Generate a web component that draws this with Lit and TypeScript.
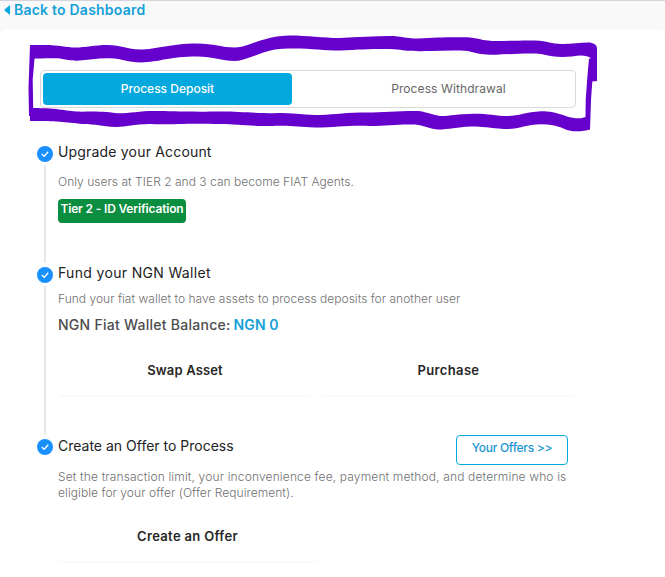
import { LitElement, html, css } from "lit";
import { customElement, state } from "lit/decorators.js";

const tick = html`<svg class="tick" viewBox="0 0 16 16" width="16" height="16">
  <circle cx="8" cy="8" r="8" fill="#1890ff"></circle>
  <path d="M4.8 8.1 L7.2 10.3 L11.2 5.8" fill="none" stroke="#fff" stroke-width="1.3"></path>
</svg>`;

const marker = html`<svg class="marker" viewBox="0 0 665 140" width="665" height="140">
  <path fill="#6600cc" fill-rule="evenodd" d="M30 45 L45 45 C58 45 67 47.5 75 47.5 C86 47.5 95 45 107 45 C122 45 127 49.5 140 49.5 C157 49.5 170 43.5 197 43.5 C214 43.5 222 47.5 235 47.5 C249 47.5 262 36 290 35.5 C308 35.5 322 38 340 38 C358 37 375 36 390 36 C402 36 404 38.5 418 38.5 C438 37.5 450 37 470 37.5 C480 38.5 484 41 496 41 C510 41 520 40.2 535 40.5 C548 41 551 44 562 44 C573 44 582 42.2 590 42.5 C595 43.5 597 45 597 49 L597 81 L592.3 81.5 L591 100 L590 129.5 C584 131.5 573 132 567 130 C558 126 550 124.3 541 124.3 C527 124.3 520 129 508 129 C495 129 487 126.5 471 126.5 C457 127 449 129.5 438 129.5 C426 128 425 125.5 415 124.5 C396 124 388 126 370 126 C350 125 336 127.5 315 127.5 C297 127 292 125 270 126 C245 126 238 124 220 124 C182 123 170 125 150 124 C133 124 127 127 116 127 C101 126.5 96 124 83 124 C64 122 57 121 30 121 L30 116 L29 116 L28.5 88 Z
    M34.5 58.8 C36 58.3 45 58.5 58 58.3 C64 59 68 60.7 77 60.7 C89 60 98 58 110 58.3 C123 58.8 127 62.5 141 62.5 C159 62 170 56.5 197 56.5 C214 56.5 221 61 235 61 C248 60.5 264 49.5 283 48.8 C305 47.5 322 50.5 340 50.5 C366 49 386 48.5 397 49.5 C408 50.7 410 51.5 430 51 C443 50.5 457 50 468 51 C479 54 485 55 496 54.8 C512 54 530 52.8 541 54 C553 57 560 57.5 572 56.5 C580 55 587 55 591 58.3 L589 58.8 L587.5 75 L585.7 100 L585.5 117 C580 119.5 573 118 567 116.5 C556 112.5 549 111.3 541 111.3 C526 112 519 116 508 116 C495 116 487 113.5 473 113.8 C457 114 449 116.3 440 116 C426 113 424 111 415 111 C394 111 380 113 360 112.5 C342 113 331 115 315 115 C299 114.5 286 112.5 275 113.3 C250 113 241 111.5 220 111.5 C185 112 170 111 155 111 C138 111 130 113.5 117 113.3 C103 111.5 94 111.5 82 111.7 C66 111.5 60 108 33.2 108 L32.7 80 Z"></path>
</svg>`;

@customElement("app-root")
export class AppRoot extends LitElement {
  @state() private mode: "deposit" | "withdrawal" = "deposit";

  static styles = css`
    :host {
      display: block; position: relative; box-sizing: border-box; height: 577px; overflow: hidden;
      background: #f9f9f9; border-top: 1px solid #d3d5de;
      font-family: Inter, "Noto Sans", sans-serif; color: #262626;
    }
    * { box-sizing: border-box; }
    .back { display: flex; align-items: center; height: 29px; padding: 0 0 12px 4px; gap: 4px; color: #14a1d8; font-size: 14px; font-weight: 600; letter-spacing: 0.22px; }
    .arrow { display: block; flex: none; }
    .card { height: 547px; background: #fff; border-radius: 6px 6px 0 0; padding: 40px 0 0 37px; }
    .tabs { display: flex; width: 536px; height: 38px; margin-left: 3px; border: 1px solid #d9d9d9; border-radius: 4px; padding: 2px; }
    .tab { height: 32px; border-radius: 4px; line-height: 31px; text-align: center; font-size: 12px; color: #666; letter-spacing: 0.1px; flex: 0 0 282px; padding-left: 31px; }
    .tab.active { flex: 0 0 249px; background: #02a8de; color: #fff; font-weight: 500; letter-spacing: 0; padding: 0; }
    .steps { padding-top: 38px; }
    .step { display: flex; gap: 5px; }
    .s1 { height: 121px; }
    .s2 { height: 172px; }
    .rail { display: flex; flex-direction: column; align-items: center; width: 16px; }
    .tick { display: block; flex: none; }
    .rail::after { content: ""; width: 2px; flex: 1; background: #e8e8e8; margin: 3px 0 4px; }
    .s3 .rail::after { display: none; }
    .body { width: 518px; }
    .head { display: flex; justify-content: space-between; height: 26px; }
    .title { font-size: 14px; line-height: 17px; margin-top: -2px; white-space: nowrap; color: #222; }
    .s1 .title { letter-spacing: 0.18px; margin-top: -3px; }
    .s2 .title { letter-spacing: 0.33px; margin-top: -3px; }
    .note { font-size: 12px; line-height: 16px; font-weight: 300; color: #707070; white-space: nowrap; }
    .s1 .note { letter-spacing: 0.03px; margin-top: 2px; }
    .s2 .note { letter-spacing: 0.02px; margin-top: -2px; }
    .s3 .note { letter-spacing: 0.147px; margin-top: 4px; }
    .s3 .note + .note { letter-spacing: 0.06px; margin-top: 0; }
    .badge { width: 128px; height: 24px; margin-top: 9px; border-radius: 4px; background: #0b8e3f; color: #fff; font-size: 12px; font-weight: 600; line-height: 20px; letter-spacing: -0.17px; text-align: center; white-space: nowrap; }
    .balance { margin-top: 9px; font-size: 14px; line-height: 18px; font-weight: 500; color: #4c4c4c; letter-spacing: 0.26px; white-space: nowrap; }
    .amount { color: #14a1d8; font-weight: 600; letter-spacing: 0.12px; margin-left: -0.9px; }
    .actions { display: flex; gap: 9px; margin-top: 12px; }
    .action { width: 254px; height: 51px; border-radius: 5px; border-bottom: 2px solid #fafafa; text-align: center; font-size: 13px; font-weight: 600; line-height: 48px; letter-spacing: 0.15px; }
    .action + .action { letter-spacing: 0.35px; padding-left: 1px; }
    .s3 .actions { margin-top: 12px; }
    .s3 .action { width: 259px; height: 50px; line-height: 47px; letter-spacing: 0.33px; }
    .offers { width: 112px; height: 30px; margin: -4px 8px 0 0; border: 1px solid #02a8de; border-radius: 4px; text-align: center; color: #1c95d2; font-size: 12px; font-weight: 500; line-height: 24px; letter-spacing: -0.28px; white-space: nowrap; }
    .marker { position: absolute; left: 0; top: -1px; pointer-events: none; }
  `;

  render() {
    return html`
      <div class="back">
        <svg class="arrow" width="6" height="10" viewBox="0 0 6 10"><path d="M6 0 V10 L0 5 Z" fill="#02a8de"></path></svg>
        <span>Back to Dashboard</span>
      </div>
      <div class="card">
        <div class="tabs">
          <div class="tab ${this.mode === "deposit" ? "active" : ""}" @click=${() => (this.mode = "deposit")}>Process Deposit</div>
          <div class="tab ${this.mode === "withdrawal" ? "active" : ""}" @click=${() => (this.mode = "withdrawal")}>Process Withdrawal</div>
        </div>
        <div class="steps">
          <section class="step s1">
            <div class="rail">${tick}</div>
            <div class="body">
              <div class="head"><div class="title">Upgrade your Account</div></div>
              <div class="note">Only users at TIER 2 and 3 can become FIAT Agents.</div>
              <div class="badge">Tier 2 - ID Verification</div>
            </div>
          </section>
          <section class="step s2">
            <div class="rail">${tick}</div>
            <div class="body">
              <div class="head"><div class="title">Fund your NGN Wallet</div></div>
              <div class="note">Fund your fiat wallet to have assets to process deposits for another user</div>
              <div class="balance">NGN Fiat Wallet Balance: <span class="amount">NGN 0</span></div>
              <div class="actions"><div class="action">Swap Asset</div><div class="action">Purchase</div></div>
            </div>
          </section>
          <section class="step s3">
            <div class="rail">${tick}</div>
            <div class="body">
              <div class="head"><div class="title">Create an Offer to Process</div><div class="offers">Your Offers &gt;&gt;</div></div>
              <div class="note">Set the transaction limit, your inconvenience fee, payment method, and determine who is</div>
              <div class="note">eligible for your offer (Offer Requirement).</div>
              <div class="actions"><div class="action">Create an Offer</div></div>
            </div>
          </section>
        </div>
      </div>
      ${marker}
    `;
  }
}
